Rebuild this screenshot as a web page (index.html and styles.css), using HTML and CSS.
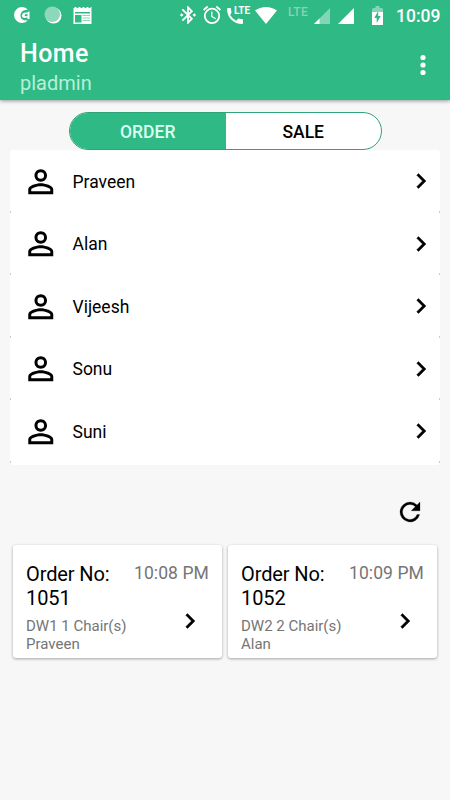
FILE: index.html
```html
<!DOCTYPE html>
<html lang="en">
<head>
    <meta charset="UTF-8">
    <meta name="viewport" content="width=device-width, initial-scale=1.0">
    <title>Home</title>
    <link rel="stylesheet" href="styles.css">
</head>
<body>
    <!-- Shared icons -->
    <svg class="sprite" xmlns="http://www.w3.org/2000/svg">
        <symbol id="person" viewBox="0 0 24 24">
            <path d="M12 5.9a2.1 2.1 0 1 1 0 4.2 2.1 2.1 0 0 1 0-4.2m0 9c2.97 0 6.1 1.46 6.1 2.1v1.1H5.9V17c0-.64 3.13-2.1 6.1-2.1M12 4C9.79 4 8 5.79 8 8s1.79 4 4 4 4-1.79 4-4-1.79-4-4-4zm0 9c-2.67 0-8 1.34-8 4v3h16v-3c0-2.66-5.33-4-8-4z"/>
        </symbol>
        <symbol id="chevron" viewBox="0 0 24 24">
            <path d="M10 6 8.59 7.41 13.17 12l-4.58 4.59L10 18l6-6z"/>
        </symbol>
    </svg>

    <header class="app-bar">
        <div class="status-bar">
            <svg class="st-app" viewBox="0 0 16 16">
                <path d="M14 2.700A8 8 0 1 0 14 13.300Q8.500 14 7 11Q6 8.500 7 6Q9 2.500 14 2.700z"/>
                <path fill-rule="evenodd" d="M15.500 4v8h-2v-1.500Q8 12 8 8.500T13.500 5.500zM13.500 7Q10.500 7 10.500 8.300T13.500 9.200z"/>
            </svg>
            <svg class="st-sync" viewBox="0 0 18 18">
                <circle cx="9.500" cy="9.500" r="8"/>
                <circle class="st-disc" cx="8.300" cy="8.300" r="7.800"/>
            </svg>
            <svg class="st-news" viewBox="0 0 19 17">
                <path fill-rule="evenodd" d="M.5 1h1V0h2v1h2V0h2v1h2V0h2v1h2V0h2v1h2V0h1v17H.5zM2 5v1.500h15V5zM2 8v7.500h6.500V8z"/>
                <path class="st-lines" d="M9.500 8h7.500v1H9.500zM9.500 10.500h7.500v1H9.500zM9.500 13h7.500v1H9.500z"/>
            </svg>
            <svg class="st-bluetooth" viewBox="2 2 20 20">
                <path d="m7 12-2-2-2 2 2 2 2-2zm10.710-4.290L12 2h-1v7.590L6.410 5 5 6.410 10.590 12 5 17.590 6.410 19 11 14.410V22h1l5.710-5.710-4.300-4.290 4.300-4.290zM13 5.830l1.880 1.880L13 9.590V5.830zm1.880 10.460L13 18.170v-3.760l1.880 1.880zM19 10l-2 2 2 2 2-2-2-2z"/>
            </svg>
            <svg class="st-alarm" viewBox="2 2 20 20">
                <path d="m22 5.720-4.600-3.860-1.290 1.530 4.600 3.860L22 5.720zM7.880 3.390 6.600 1.860 2 5.710l1.290 1.530 4.590-3.850zM12.500 8H11v6l4.750 2.850.75-1.230-4-2.370V8zM12 4a9 9 0 1 0 0 18 9 9 0 0 0 0-18zm0 16a7 7 0 1 1 0-14 7 7 0 0 1 0 14z"/>
            </svg>
            <div class="st-call">
                <svg viewBox="3 3 18 18">
                    <path d="M6.620 10.790a15.150 15.150 0 0 0 6.590 6.590l2.200-2.200c.27-.27.67-.36 1.020-.24 1.120.37 2.330.57 3.570.57.55 0 1 .45 1 1V20c0 .55-.45 1-1 1C10.610 21 3 13.390 3 4c0-.55.45-1 1-1h2.500c.55 0 1 .45 1 1 0 1.250.2 2.450.57 3.570.11.35.03.74-.25 1.020l-1.200 2.200z"/>
                </svg>
                <span>LTE</span>
            </div>
            <svg class="st-wifi" viewBox="0 0 22 17">
                <path d="M11 17 0 3.600Q5 0 11 0t11 3.600z"/>
            </svg>
            <span class="st-lte">LTE</span>
            <svg class="st-signal" viewBox="0 0 16 16">
                <path class="dim" d="M0 16 16 0v16z"/>
                <path d="M0 16 5.500 10.500V16z"/>
            </svg>
            <svg class="st-signal full" viewBox="0 0 16 16">
                <path d="M0 16 16 0v16z"/>
            </svg>
            <svg class="st-battery" viewBox="0 0 11 19">
                <path class="dim" d="M0 3.500Q0 2 1.500 2H3.500V0h4v2h2Q11 2 11 3.500V6H0z"/>
                <path fill-rule="evenodd" d="M0 6h11v13H0zM6.200 5 2.300 12h2.400v5L8.700 10H6.200z"/>
            </svg>
            <span class="st-clock">10:09</span>
        </div>
        <div class="toolbar">
            <div>
                <h1 class="title">Home</h1>
                <p class="subtitle">pladmin</p>
            </div>
            <button class="menu-btn" aria-label="More options">
                <svg viewBox="0 0 6 22">
                    <circle cx="3" cy="3.500" r="2.600"/>
                    <circle cx="3" cy="11" r="2.600"/>
                    <circle cx="3" cy="18.500" r="2.600"/>
                </svg>
            </button>
        </div>
    </header>

    <main class="content">
        <div class="tabs">
            <button class="tab active">ORDER</button>
            <button class="tab">SALE</button>
        </div>

        <ul class="staff-list">
            <li class="staff-row">
                <svg class="person"><use href="#person"/></svg>
                <span class="name">Praveen</span>
                <svg class="chevron"><use href="#chevron"/></svg>
            </li>
            <li class="staff-row">
                <svg class="person"><use href="#person"/></svg>
                <span class="name">Alan</span>
                <svg class="chevron"><use href="#chevron"/></svg>
            </li>
            <li class="staff-row">
                <svg class="person"><use href="#person"/></svg>
                <span class="name">Vijeesh</span>
                <svg class="chevron"><use href="#chevron"/></svg>
            </li>
            <li class="staff-row">
                <svg class="person"><use href="#person"/></svg>
                <span class="name">Sonu</span>
                <svg class="chevron"><use href="#chevron"/></svg>
            </li>
            <li class="staff-row">
                <svg class="person"><use href="#person"/></svg>
                <span class="name">Suni</span>
                <svg class="chevron"><use href="#chevron"/></svg>
            </li>
        </ul>

        <button class="refresh-btn" aria-label="Refresh">
            <svg viewBox="0 0 24 24">
                <path d="M17.650 6.350A7.960 7.960 0 0 0 12 4a8 8 0 1 0 7.730 10h-2.080A6 6 0 1 1 12 6c1.660 0 3.140.69 4.220 1.780L13 11h7V4l-2.350 2.350z"/>
            </svg>
        </button>

        <div class="orders">
            <div class="order-card">
                <div class="order-head">
                    <h2 class="order-no">Order No: 1051</h2>
                    <span class="order-time">10:08 PM</span>
                </div>
                <div class="order-body">
                    <p class="order-info">DW1 1 Chair(s)<br>Praveen</p>
                    <svg class="chevron"><use href="#chevron"/></svg>
                </div>
            </div>
            <div class="order-card">
                <div class="order-head">
                    <h2 class="order-no">Order No: 1052</h2>
                    <span class="order-time">10:09 PM</span>
                </div>
                <div class="order-body">
                    <p class="order-info">DW2 2 Chair(s)<br>Alan</p>
                    <svg class="chevron"><use href="#chevron"/></svg>
                </div>
            </div>
        </div>
    </main>
</body>
</html>
```
FILE: styles.css
```css
* {
    margin: 0;
    padding: 0;
    box-sizing: border-box;
}

body {
    font-family: Roboto, "Liberation Sans", sans-serif;
    background: #f7f7f7;
    color: #000000;
    min-height: 100vh;
    overflow: hidden;
}

button {
    font-family: inherit;
    border: none;
    background: none;
    cursor: pointer;
}

svg {
    display: block;
    flex-shrink: 0;
}

.sprite {
    display: none;
}

/* App bar */
.app-bar {
    height: 100px;
    background: #2fb985;
    color: #ffffff;
    fill: #ffffff;
    box-shadow: 0 1px 4px rgba(0, 0, 0, 0.4);
}

.status-bar {
    height: 30px;
    display: flex;
    align-items: center;
    padding-left: 14px;
}

.dim {
    opacity: 0.4;
}

.st-app {
    width: 16px;
    height: 16px;
}

.st-sync {
    width: 18px;
    height: 18px;
    margin-left: 14px;
}

.st-disc {
    fill: #8cd8bb;
}

.st-news {
    width: 19px;
    height: 17px;
    margin-left: 11px;
}

.st-lines {
    fill: #8cd8bb;
}

.st-bluetooth {
    width: 18px;
    height: 18px;
    margin-left: 87px;
}

.st-alarm {
    width: 18px;
    height: 18px;
    margin-left: 6px;
    overflow: visible;
}

.st-call {
    display: flex;
    width: 23px;
    height: 18px;
    margin-left: 6px;
}

.st-call svg {
    width: 16px;
    height: 16px;
    margin-top: 2px;
}

.st-call span {
    margin-left: -9px;
    font-size: 10px;
    line-height: 9px;
    font-weight: 700;
}

.st-wifi {
    width: 22px;
    height: 17px;
    margin-left: 5px;
}

.st-lte {
    width: 26px;
    margin-left: 11px;
    margin-bottom: 7px;
    font-size: 12px;
    line-height: 12px;
    font-weight: 500;
    letter-spacing: 0.3px;
    opacity: 0.4;
}

.st-signal {
    width: 16px;
    height: 16px;
    margin-top: 2px;
}

.st-signal.full {
    margin-left: 8px;
}

.st-battery {
    width: 11px;
    height: 19px;
    margin-left: 18px;
    margin-top: 1px;
}

.st-clock {
    margin-left: 13px;
    font-size: 17.500px;
    line-height: 20px;
    margin-top: 2px;
    font-weight: 500;
}

.toolbar {
    height: 70px;
    display: flex;
    justify-content: space-between;
    align-items: center;
    padding: 0 24.500px 0 20px;
}

.title {
    font-size: 25px;
    line-height: 29px;
    font-weight: 500;
    letter-spacing: 0.4px;
    margin-top: 3px;
}

.subtitle {
    font-size: 20px;
    line-height: 24px;
    margin-top: 3px;
    color: #b6f0d8;
}

.menu-btn svg {
    width: 6px;
    height: 22px;
    fill: #ffffff;
}

/* Order / sale switch */
.content {
    padding: 12px 10px 0;
}

.tabs {
    display: flex;
    width: 313px;
    height: 38px;
    margin-left: 59px;
    border: 1px solid #2fa57b;
    border-radius: 19px;
    background: #ffffff;
    overflow: hidden;
}

.tab {
    flex: 1;
    padding-top: 1px;
    font-size: 17.500px;
    font-weight: 500;
    color: #000000;
}

.tab.active {
    background: #2fb985;
    color: #dcfff1;
}

/* Staff list */
.staff-list {
    list-style: none;
    height: 315px;
    background: #ffffff;
    border-radius: 3px;
}

.staff-row {
    display: flex;
    align-items: center;
    height: 62.500px;
    padding: 0 4px 0 12px;
    /* small shadow specks where the row corners meet */
    background:
        linear-gradient(#cccccc, #cccccc) left bottom / 1px 2px no-repeat,
        linear-gradient(#cccccc, #cccccc) right bottom / 1px 2px no-repeat;
}

.person {
    width: 37.500px;
    height: 37.500px;
}

.name {
    flex: 1;
    margin-left: 13px;
    padding-top: 1px;
    font-size: 17.500px;
}

.chevron {
    width: 30px;
    height: 30px;
    stroke: #000000;
    stroke-width: 0.3px;
}

.refresh-btn {
    display: block;
    margin: 32px 15px 0 auto;
}

.refresh-btn svg {
    width: 30px;
    height: 30px;
    stroke: #000000;
    stroke-width: 0.2px;
}

/* Order cards */
.orders {
    display: flex;
    gap: 6px;
    padding: 18px 3px 0;
}

.order-card {
    flex: 1;
    height: 113px;
    padding: 17px 13px 0;
    background: #ffffff;
    border-radius: 3px;
    box-shadow: 0 1px 3px rgba(0, 0, 0, 0.35);
}

.order-head {
    display: flex;
    justify-content: space-between;
}

.order-no {
    width: 95px;
    font-size: 20px;
    line-height: 24px;
    font-weight: 400;
    letter-spacing: -0.1px;
}

.order-time {
    font-size: 17.500px;
    line-height: 22px;
    letter-spacing: 0.1px;
    color: #757575;
    white-space: nowrap;
}

.order-body {
    display: flex;
    justify-content: space-between;
    padding: 8px 4px 0 0;
}

.order-info {
    font-size: 15px;
    line-height: 17.500px;
    color: #757575;
}

.order-body .chevron {
    margin-top: -12px;
}
```
